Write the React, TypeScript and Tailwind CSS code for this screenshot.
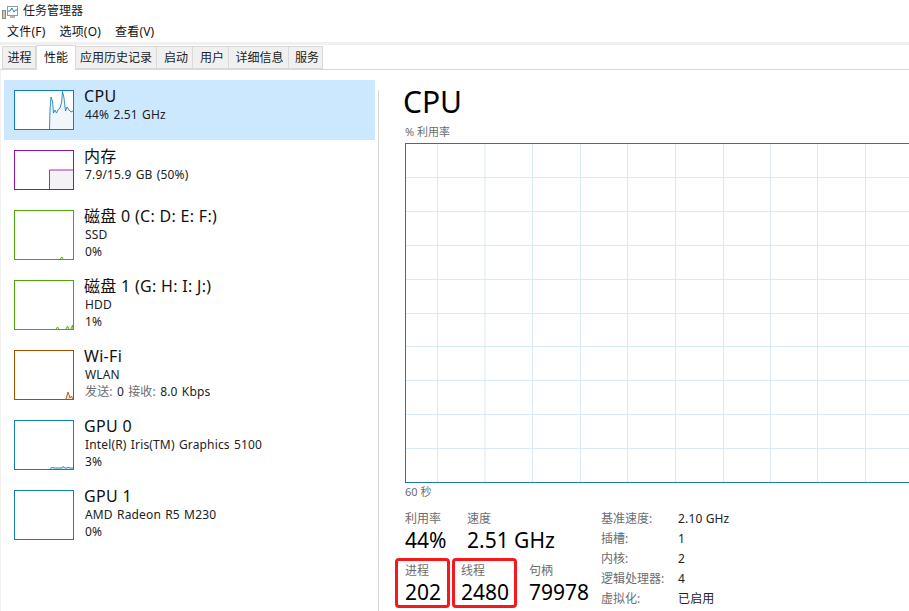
const font = "font-['Noto_Sans','Noto_Sans_CJK_SC',sans-serif]";

const tabs = [
  { label: "进程", w: "w-[34px] pl-px" },
  { label: "性能", w: "w-[40px]", active: true },
  { label: "应用历史记录", w: "w-[81px]" },
  { label: "启动", w: "w-[36px] pl-[3px]" },
  { label: "用户", w: "w-[36px] pl-[3px]" },
  { label: "详细信息", w: "w-[60px] pl-[2px]" },
  { label: "服务", w: "w-[34px] pl-[3px]" },
];

function AppIcon() {
  return (
    <svg width="16" height="16" viewBox="0 0 16 16" className="shrink-0">
      <rect x="5.5" y="3.5" width="10" height="9" fill="#fff" stroke="#8a9aa6" />
      <rect x="0.5" y="7.5" width="3" height="8" fill="#c9c9b8" stroke="#8b8b7a" />
      <path d="M6 8 L8 8 L10 5 L12 9 L13.5 7 L15 7" fill="none" stroke="#2a7fb8" strokeWidth="1" />
      <rect x="8" y="13" width="5" height="2" fill="#b5b5a8" />
    </svg>
  );
}

function Thumb({ color, fill, path, area, h }: { color: string; fill: string; path?: string; area?: string; h: number }) {
  return (
    <svg width="60" height={h} viewBox={`0 0 60 ${h}`} className="block shrink-0">
      <rect x="0" y="0" width="60" height={h} fill="#fff" />
      {area && <path d={area} fill={fill} />}
      {path && <path d={path} fill="none" stroke={color} strokeWidth="1" opacity="0.85" />}
      <rect x="0.5" y="0.5" width="59" height={h - 1} fill="none" stroke={color} />
    </svg>
  );
}

const cpuLine = "M35.5 39 L36 20 L37 7 L38.5 11 L39.5 23 L41 20 L42.5 23 L44.5 19 L46 18 L47.5 13 L48.5 1.5 L50 8 L51.5 21 L53 17 L55 20 L57 22 L59 21";
const cpuArea = cpuLine + " L59 39 L35.5 39 Z";

const rows = [
  { title: "CPU", lines: [{ t: "44% 2.51 GHz" }], h: "h-[60px]", th: 40, color: "#117dbb", fill: "#f1f6fa", path: cpuLine, area: cpuArea, active: true },
  { title: "内存", lines: [{ t: "7.9/15.9 GB (50%)" }], h: "h-[60px]", th: 40, color: "#8b12ae", fill: "#f4f2f4", path: "M35.5 39 L35.5 20 L59 20", area: "M35.5 39 L35.5 20 L59 20 L59 39 Z" },
  { title: "磁盘 0 (C: D: E: F:)", lines: [{ t: "SSD" }, { t: "0%" }], h: "h-[70px]", th: 50, color: "#4da60c", fill: "#dbedce", path: "M46 49 L48 47 L49 49", area: "M46 49 L48 47 L49 49 Z" },
  { title: "磁盘 1 (G: H: I: J:)", lines: [{ t: "HDD" }, { t: "1%" }], h: "h-[70px]", th: 50, color: "#4da60c", fill: "#dbedce", path: "M42 49 L43.5 47 L45 49 M52 49 L53.5 46 L55 49 M57 49 L58.5 45 L59 49", area: "M42 49 L43.5 47 L45 49 Z M52 49 L53.5 46 L55 49 Z M57 49 L58.5 45 L59 49 Z" },
  { title: "Wi-Fi", lines: [{ t: "WLAN" }, { t: "发送: ", g: true, rest: "0", g2: " 接收: ", rest2: "8.0 Kbps" }], h: "h-[70px]", th: 50, color: "#a74f01", fill: "#f3e2d2", path: "M52 49 L54 42 L56 48 L57.5 46 L59 49", area: "M52 49 L54 42 L56 48 L57.5 46 L59 49 Z" },
  { title: "GPU 0", lines: [{ t: "Intel(R) Iris(TM) Graphics 5100" }, { t: "3%" }], h: "h-[70px]", th: 50, color: "#117dbb", fill: "#d9eaf4", path: "M36 48.5 L38 47.5 L41 48 L48 48 L49 46.5 L51 48 L53 48 L54 47 L56 48 L59 48", area: "M36 49 L38 47.5 L41 48 L48 48 L49 46.5 L51 48 L53 48 L54 47 L56 48 L59 48 L59 49 Z" },
  { title: "GPU 1", lines: [{ t: "AMD Radeon R5 M230" }, { t: "0%" }], h: "h-[70px]", th: 50, color: "#117dbb", fill: "#d9eaf4" },
];

function Stat({ label, value, className = "" }: { label: string; value: string; className?: string }) {
  return (
    <div className={className}>
      <div className="text-[12px] leading-[17px] text-[#6d6d6d]">{label}</div>
      <div className="text-[21px] leading-[27px] text-black whitespace-nowrap">{value}</div>
    </div>
  );
}

const vLines = [31, 78.5, 126, 174, 221, 269, 317, 364, 411, 459];
const hLines = [34, 68, 102, 136, 170, 203, 237, 271, 305];

const info = [
  ["基准速度:", "2.10 GHz"],
  ["插槽:", "1"],
  ["内核:", "2"],
  ["逻辑处理器:", "4"],
  ["虚拟化:", "已启用"],
];

export default function App() {
  return (
    <div className={`${font} w-[909px] h-[611px] overflow-hidden bg-white text-[#1a1a1a] flex flex-col text-[12px]`}>
      <div className="h-[22px] flex items-center pl-[2px] gap-[5px] shrink-0">
        <AppIcon />
        <span className="text-[12px] leading-[22px] text-[#222]">任务管理器</span>
      </div>
      <div className="h-[20px] flex items-center pl-[7px] gap-[14px] shrink-0 text-[12px] text-[#111] tracking-[0.2px]">
        <span>文件(F)</span>
        <span>选项(O)</span>
        <span>查看(V)</span>
      </div>
      <div className="h-[3px] bg-[#f0f0f0] shrink-0" />
      <div className="h-[25px] shrink-0 flex items-end pl-[2px] border-b border-[#d9d9d9]">
        {tabs.map((t) => (
          <div
            key={t.label}
            className={
              t.active
                ? `${t.w} h-[25px] -mb-px bg-white border border-b-0 border-[#d9d9d9] flex items-center justify-center text-[12px] text-[#111]`
                : `${t.w} h-[23px] bg-[#f0f0f0] border-y border-r border-[#d9d9d9] first:border-l flex items-center justify-center text-[12px] text-[#222]`
            }
          >
            {t.label}
          </div>
        ))}
      </div>
      <div className="flex flex-1 min-h-0">
        <div className="w-[378px] shrink-0 pt-[10px] pl-[4px] pr-[3px] border-l border-[#f0f0f0]">
          {rows.map((r) => (
            <div key={r.title} className={`${r.h} flex pl-[10px] pt-[10px] -ml-px ${r.active ? "bg-[#cce8ff]" : ""}`}>
              <Thumb color={r.color} fill={r.fill} path={r.path} area={r.area} h={r.th} />
              <div className="ml-[10px] -mt-[4px]">
                <div className="text-[16px] leading-[20px] text-[#111] whitespace-nowrap tracking-[0.3px]">{r.title}</div>
                {r.lines.map((l, i) => (
                  <div key={i} className="pl-px text-[12px] leading-[17px] text-[#222] whitespace-nowrap tracking-[0.15px] [word-spacing:1px]">
                    {"g" in l && l.g ? (
                      <>
                        <span className="text-[#6d6d6d]">{l.t}</span>
                        {l.rest}
                        <span className="text-[#6d6d6d]">{l.g2}</span>
                        {l.rest2}
                      </>
                    ) : (
                      l.t
                    )}
                  </div>
                ))}
              </div>
            </div>
          ))}
        </div>
        <div className="flex-1 min-w-0 mt-[20px] border-l border-[#d9d9d9] flex flex-col">
          <div className="pl-[24px] text-[30px] leading-[24px] text-black h-[24px] shrink-0">CPU</div>
          <div className="pl-[26px] mt-[10px] text-[11px] leading-[16px] text-[#6d6d6d]">% 利用率</div>
          <div className="ml-[26px] mt-[3px] w-[520px] h-[340px] shrink-0 border border-[#1a77b0] bg-white">
            <svg width="518" height="338" className="block">
              {vLines.map((x) => (
                <line key={x} x1={x + 0.5} y1="0" x2={x + 0.5} y2="338" stroke="#d9eaf4" />
              ))}
              {hLines.map((y) => (
                <line key={y} x1="0" y1={y - 0.5} x2="518" y2={y - 0.5} stroke="#d9eaf4" />
              ))}
            </svg>
          </div>
          <div className="pl-[26px] mt-[1px] text-[11px] leading-[16px] text-[#6d6d6d]">60 秒</div>
          <div className="flex pl-[16px] mt-[10px]">
            <div className="w-[206px] shrink-0">
              <div className="flex pl-[10px]">
                <Stat label="利用率" value="44%" className="w-[62px]" />
                <Stat label="速度" value="2.51 GHz" />
              </div>
              <div className="flex mt-[4px] items-start">
                <Stat label="进程" value="202" className="w-[55px] h-[50px] border-[3px] border-[#f5191c] rounded-[4px] pl-[7px] pt-[1px] box-border" />
                <Stat label="线程" value="2480" className="ml-[2px] w-[65px] h-[50px] border-[3px] border-[#f5191c] rounded-[4px] pl-[6px] pt-[1px] box-border" />
                <Stat label="句柄" value="79978" className="ml-[12px] pt-[4px]" />
              </div>
            </div>
            <div className="grid grid-cols-[77px_auto] auto-rows-[20px] items-center -mt-[1px] text-[12px]">
              {info.map(([k, v]) => (
                <div key={k} className="contents">
                  <span className="text-[#6d6d6d] whitespace-nowrap">{k}</span>
                  <span className="text-[#222] whitespace-nowrap tracking-[0.15px]">{v}</span>
                </div>
              ))}
            </div>
          </div>
        </div>
      </div>
    </div>
  );
}
